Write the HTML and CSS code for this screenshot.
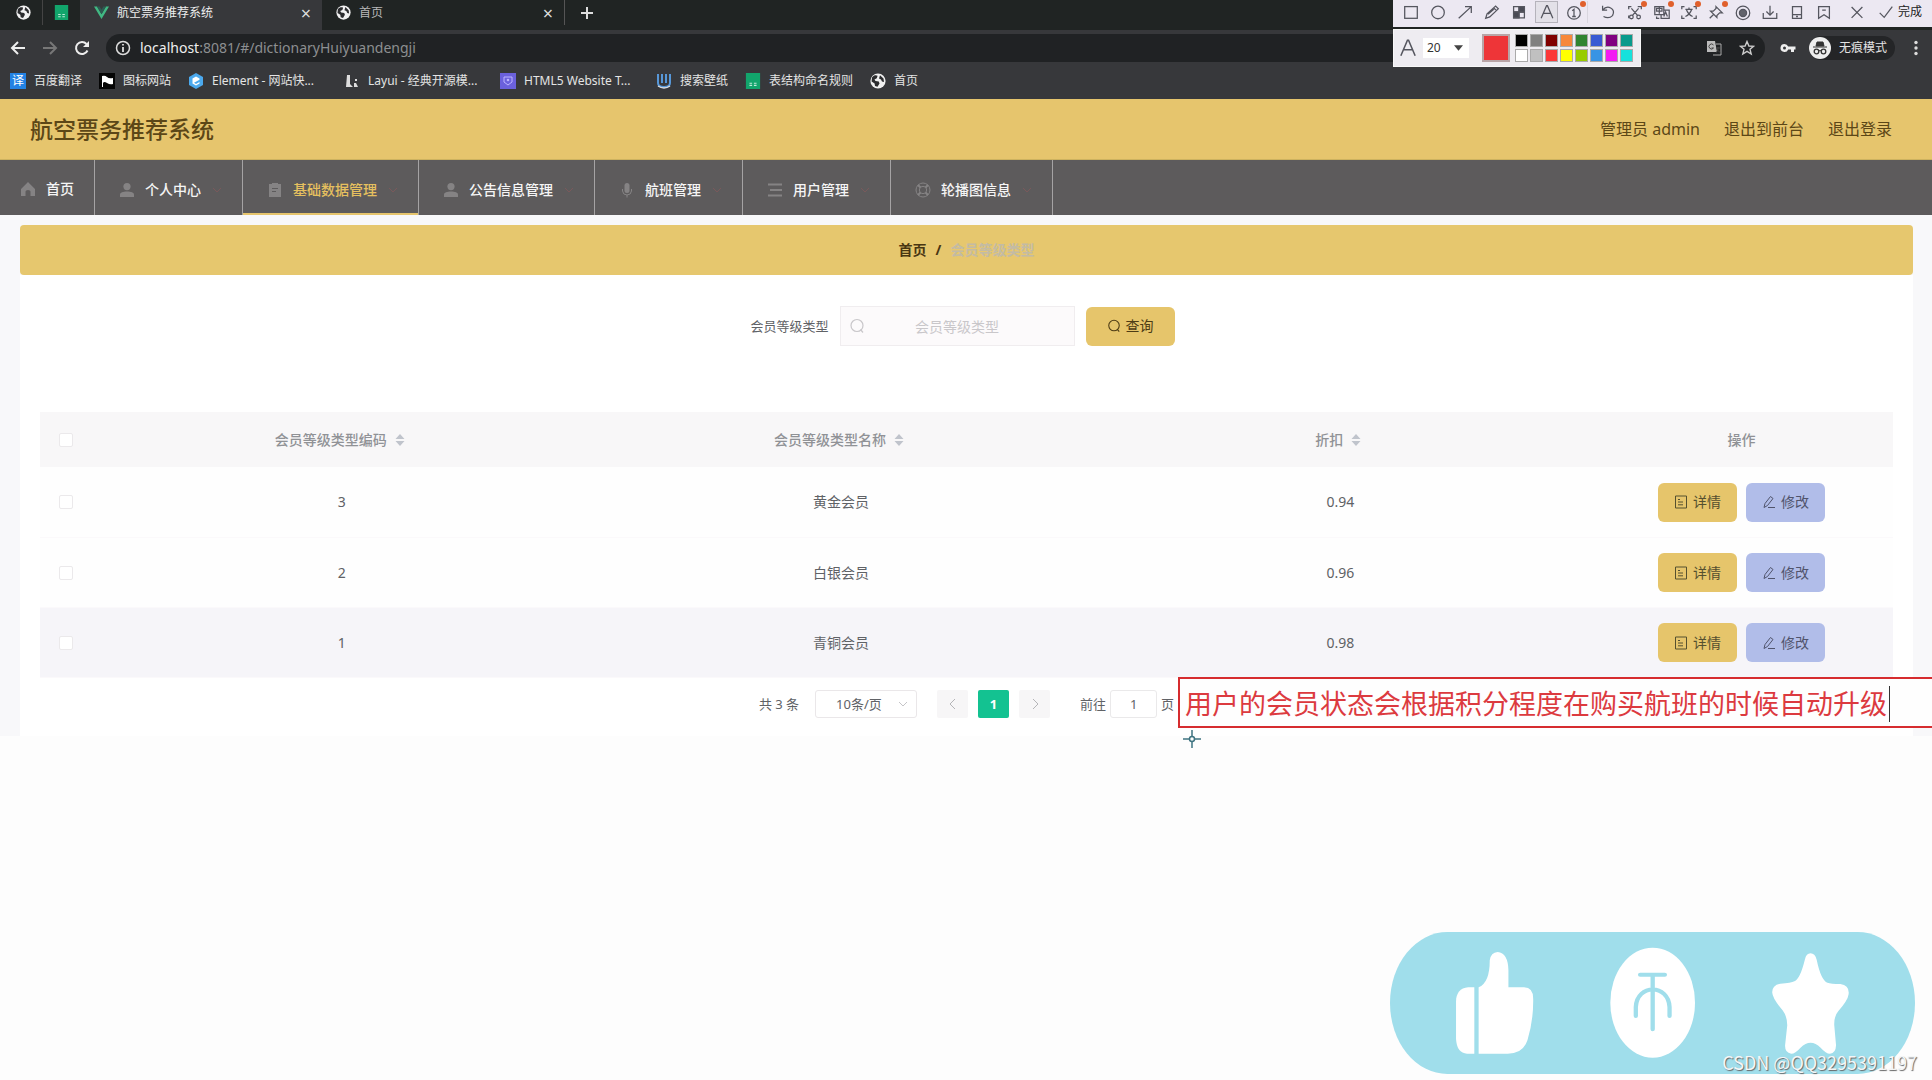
FILE: index.html
```html
<!DOCTYPE html>
<html lang="zh-CN">
<head>
<meta charset="utf-8">
<title>航空票务推荐系统</title>
<link rel="stylesheet" href="styles.css">
</head>
<body>
<svg class="sprite" aria-hidden="true">
  <symbol id="globe" viewBox="0 0 16 16"><circle cx="8" cy="8" r="7.6" fill="#f1f1f1"/><path d="M2 4.5C4 2 6 2 7.600 2.800L6.800 5.200 4.500 6.500 5.500 8 8.800 8.500 9.500 10.500 7.500 13.800 5 13 4.600 10.500 1.600 8.500ZM10 2.200 13.500 5.500 14 9 12 8.600 11 6.500 9 5.600Z" fill="#2b2c2e"/></symbol>
  <symbol id="sheet" viewBox="0 0 16 18"><path d="M0 0H16V18H0Z" fill="#12a56c"/><path d="M4 11.500H7M9 11.500H12M4 14H7M9 14H12" stroke="#bfead8" stroke-width="1.300"/></symbol>
  <symbol id="person" viewBox="0 0 16 16"><circle cx="8" cy="4.600" r="3.600"/><path d="M1 15V12.500C1 10.500 4 9.500 8 9.500S15 10.500 15 12.500V15Z"/></symbol>
  <symbol id="chev" viewBox="0 0 12 12"><path d="M2 4 6 8 10 4" fill="none" stroke="currentColor"/></symbol>
  <symbol id="search" viewBox="0 0 16 16"><circle cx="8" cy="7.500" r="6" fill="none" stroke="currentColor" stroke-width="1.200"/><path d="M11.500 11.500 14 14.500" stroke="currentColor" stroke-width="1.200"/></symbol>
  <symbol id="doc" viewBox="0 0 14 14"><path d="M1.500 1H12.500V13H1.500ZM4 4.500H6M4 7H9M4 9.800H9" fill="none" stroke="currentColor"/></symbol>
  <symbol id="edit" viewBox="0 0 14 14"><path d="M2 12.500 3 8.500 8.500 1.500 11 3.500 5.500 10.500ZM6 12.500H13" fill="none" stroke="currentColor"/></symbol>
  <symbol id="sort" viewBox="0 0 10 14"><path d="M5 1 9.500 6H.5ZM5 13 .5 8H9.500Z" fill="#c0c4cc"/></symbol>
</svg>

<header class="browser">
  <div class="tabs">
    <div class="pin"><svg class="i16"><use href="#globe"/></svg></div>
    <div class="pin pin-line"><svg class="i16"><use href="#sheet"/></svg></div>
    <div class="tab tab-on">
      <svg class="i16" viewBox="0 0 16 16"><path d="M0 1.500H3.200L8 9.800 12.800 1.500H16L8 15Z" fill="#41b883"/><path d="M3.200 1.500H6L8 5 10 1.500H12.800L8 9.800Z" fill="#2c5b52"/></svg>
      <span>航空票务推荐系统</span>
      <button class="x" aria-label="关闭标签页">×</button>
    </div>
    <div class="tab">
      <svg class="i16"><use href="#globe"/></svg><span>首页</span>
      <button class="x" aria-label="关闭标签页">×</button>
    </div>
    <button class="plus" aria-label="新标签页"><svg class="i16" viewBox="0 0 16 16"><path d="M8 2V14M2 8H14" stroke="#ddd" stroke-width="2"/></svg></button>
  </div>
  <div class="toolbar">
    <button class="tool" aria-label="后退"><svg class="i16" viewBox="0 0 16 16"><path d="M15 8H2M8 2 2 8 8 14" fill="none" stroke="#eee" stroke-width="2"/></svg></button>
    <button class="tool" aria-label="前进"><svg class="i16" viewBox="0 0 16 16"><path d="M1 8H14M8 2 14 8 8 14" fill="none" stroke="#777" stroke-width="2"/></svg></button>
    <button class="tool" aria-label="刷新"><svg class="i16" viewBox="0 0 16 16"><path d="M13.500 10.500A6 6 0 1 1 12.500 4" fill="none" stroke="#eee" stroke-width="2"/><path d="M15 1V7H9Z" fill="#eee"/></svg></button>
    <div class="address">
      <svg class="i16" viewBox="0 0 16 16"><circle cx="8" cy="8" r="6.500" fill="none" stroke="#ddd" stroke-width="1.500"/><path d="M8 7V12M8 4V5.600" stroke="#ddd" stroke-width="1.800"/></svg>
      <span class="url"><b>localhost</b>:8081/#/dictionaryHuiyuandengji</span>
      <svg class="i16" viewBox="0 0 16 16"><path d="M1 1H9L11 12H1Z" fill="#bbb"/><path d="M10 4H15V15H7" fill="none" stroke="#aaa"/><path d="M7.500 5A2.500 2.500 0 1 0 7.500 8H5.500M10 8H14M12 7V8C12 10 11 12 10 12.500M11 9.500 14 12.500" fill="none" stroke="#444"/></svg>
      <svg class="i16" viewBox="0 0 16 16"><path d="M8 1.500 9.900 6 14.600 6.300 11 9.300 12.200 14 8 11.400 3.800 14 5 9.300 1.400 6.300 6.100 6Z" fill="none" stroke="#ccc" stroke-width="1.400"/></svg>
    </div>
    <svg class="i16" viewBox="0 0 16 16"><path d="M4.500 4A4 4 0 1 0 8.200 9.500H11V12H14V9.500H15.500V6.500H8.200A4 4 0 0 0 4.500 4ZM4.500 6.500A1.500 1.500 0 1 1 4.500 9.500 1.500 1.500 0 0 1 4.500 6.500Z" fill="#eee" fill-rule="evenodd"/></svg>
    <div class="incog">
      <svg class="i22" viewBox="0 0 22 22"><circle cx="11" cy="11" r="11" fill="#eee"/><path d="M7 9 8 5H14L15 9ZM4 10H18" stroke="#333" fill="#333"/><circle cx="7.500" cy="14.500" r="2.300" fill="none" stroke="#333" stroke-width="1.300"/><circle cx="14.500" cy="14.500" r="2.300" fill="none" stroke="#333" stroke-width="1.300"/><path d="M9.500 14Q11 13 12.500 14" fill="none" stroke="#333"/></svg>
      <span>无痕模式</span>
    </div>
    <svg class="i16" viewBox="0 0 16 16" fill="#ddd"><circle cx="8" cy="2.500" r="1.700"/><circle cx="8" cy="8" r="1.700"/><circle cx="8" cy="13.500" r="1.700"/></svg>
  </div>
  <nav class="marks">
    <a href="#"><span class="yi">译</span>百度翻译</a>
    <a href="#"><svg class="i16" viewBox="0 0 16 16"><path d="M0 0H16V16H0Z" fill="#050505"/><path d="M3 3Q6 2 8 4T14 5V11Q11 12 8 10T4 10V14H3Z" fill="#fff"/></svg>图标网站</a>
    <a href="#" class="long"><svg class="i16" viewBox="0 0 16 16"><path d="M8 0 15 4V12L8 16 1 12V4Z" fill="#4ba9ee"/><path d="M11.500 5.500 8 3.500 4.500 5.500V10.500L8 12.500 11.500 10.500V9L8 11 6 9.800 11.500 6.800Z" fill="#fff"/></svg>Element - 网站快...</a>
    <a href="#" class="long"><svg class="i16" viewBox="0 0 16 16"><path d="M3 2H6V11L9 14H2ZM11 6H13V8H11ZM10 10H12L14 14H10Z" fill="#ddd"/></svg>Layui - 经典开源模...</a>
    <a href="#" class="long"><svg class="i16" viewBox="0 0 16 16"><path d="M0 0H16V16H0Z" fill="#6b61dc"/><path d="M4 4H12V9L8 12 4 9Z" fill="none" stroke="#bdb5ff"/><circle cx="8" cy="7" r="1.300" fill="#bdb5ff"/></svg>HTML5 Website T...</a>
    <a href="#"><svg class="i16" viewBox="0 0 16 16"><path d="M2 1V10Q2 14 8 14T14 10V1M6 1V10M10 1V10" fill="none" stroke="#5797d8" stroke-width="2"/><path d="M2 13Q8 17 14 13" fill="none" stroke="#ddd" stroke-width="1.500"/></svg>搜索壁纸</a>
    <a href="#"><svg class="i16"><use href="#sheet"/></svg>表结构命名规则</a>
    <a href="#"><svg class="i16"><use href="#globe"/></svg>首页</a>
  </nav>
</header>

<header class="site">
  <h1>航空票务推荐系统</h1>
  <a href="#">管理员 admin</a><a href="#">退出到前台</a><a href="#">退出登录</a>
</header>
<nav class="menu">
  <a href="#" class="home"><svg viewBox="0 0 16 16"><path d="M8 1 1 8V15H5.500V10.500Q5.500 9 8 9T10.500 10.500V15H15V8Z"/></svg>首页</a>
  <a href="#"><svg><use href="#person"/></svg>个人中心<svg class="chev"><use href="#chev"/></svg></a>
  <a href="#" class="on"><svg viewBox="0 0 16 16"><path d="M2 2H5V1H11V2H14V15H2ZM5 6V7H11V6ZM5 9V10H9V9Z" fill-rule="evenodd"/></svg>基础数据管理<svg class="chev"><use href="#chev"/></svg></a>
  <a href="#"><svg><use href="#person"/></svg>公告信息管理<svg class="chev"><use href="#chev"/></svg></a>
  <a href="#"><svg viewBox="0 0 16 16"><rect x="5.500" y="1" width="5" height="10" rx="2.500"/><path d="M3.500 7V9Q4 13 8 13T12.500 9V7M8 13V15.500" fill="none" stroke="#858384"/></svg>航班管理<svg class="chev"><use href="#chev"/></svg></a>
  <a href="#"><svg viewBox="0 0 16 16"><path d="M1 2.500H15M3 8H15M1 13.500H15" stroke="#858384" stroke-width="2"/></svg>用户管理<svg class="chev"><use href="#chev"/></svg></a>
  <a href="#"><svg viewBox="0 0 16 16"><g fill="none" stroke="#858384"><circle cx="8" cy="8" r="7"/><circle cx="8" cy="8" r="3.700"/><path d="M3 3 5.500 5.500M13 3 10.500 5.500M3 13 5.500 10.500M13 13 10.500 10.500" stroke-width="2"/></g></svg>轮播图信息<svg class="chev"><use href="#chev"/></svg></a>
</nav>

<main>
  <nav class="crumb"><a href="#">首页</a><span>/</span><span class="here">会员等级类型</span></nav>
  <section class="card">
    <form class="query">
      <label for="q">会员等级类型</label>
      <div class="field"><svg><use href="#search"/></svg><input id="q" type="text" placeholder="会员等级类型"></div>
      <button type="button" class="btn gold"><svg><use href="#search"/></svg>查询</button>
    </form>
    <table>
      <colgroup><col class="c-check"><col><col><col><col class="c-act"></colgroup>
      <thead><tr>
        <th><input type="checkbox" aria-label="全选"></th>
        <th>会员等级类型编码<svg class="sort"><use href="#sort"/></svg></th>
        <th>会员等级类型名称<svg class="sort"><use href="#sort"/></svg></th>
        <th>折扣<svg class="sort"><use href="#sort"/></svg></th>
        <th>操作</th>
      </tr></thead>
      <tbody>
        <tr><td><input type="checkbox" aria-label="选择 3"></td><td>3</td><td>黄金会员</td><td>0.94</td>
          <td><div class="acts"><button class="btn gold"><svg><use href="#doc"/></svg>详情</button><button class="btn blue"><svg><use href="#edit"/></svg>修改</button></div></td></tr>
        <tr><td><input type="checkbox" aria-label="选择 2"></td><td>2</td><td>白银会员</td><td>0.96</td>
          <td><div class="acts"><button class="btn gold"><svg><use href="#doc"/></svg>详情</button><button class="btn blue"><svg><use href="#edit"/></svg>修改</button></div></td></tr>
        <tr class="hover"><td><input type="checkbox" aria-label="选择 1"></td><td>1</td><td>青铜会员</td><td>0.98</td>
          <td><div class="acts"><button class="btn gold"><svg><use href="#doc"/></svg>详情</button><button class="btn blue"><svg><use href="#edit"/></svg>修改</button></div></td></tr>
      </tbody>
    </table>
    <div class="pager">
      <span>共 3 条</span>
      <div class="size"><select aria-label="每页条数"><option>10条/页</option></select><svg><use href="#chev"/></svg></div>
      <div class="pages">
        <button aria-label="上一页"><svg viewBox="0 0 12 12"><path d="M8 1 3 6 8 11" fill="none" stroke="currentColor"/></svg></button>
        <button class="cur">1</button>
        <button aria-label="下一页"><svg viewBox="0 0 12 12"><path d="M4 1 9 6 4 11" fill="none" stroke="currentColor"/></svg></button>
      </div>
      <label class="jump">前往<input type="text" value="1">页</label>
    </div>
  </section>
</main>

<aside class="snip">
  <div class="snip-tools">
    <button aria-label="矩形"><svg viewBox="0 0 20 20"><rect x="3" y="4" width="14" height="13"/></svg></button>
    <button aria-label="椭圆"><svg viewBox="0 0 20 20"><circle cx="10" cy="10.500" r="7"/></svg></button>
    <button aria-label="箭头"><svg viewBox="0 0 20 20"><path d="M3 17 17 4M10 4H17V11"/></svg></button>
    <button aria-label="画笔"><svg viewBox="0 0 20 20"><path d="M3 17 4.500 12 14 3.500 17 6.500 7.500 15.500ZM12 5.500 15 8.500M5.500 12.500 12 7"/></svg></button>
    <button aria-label="马赛克"><svg viewBox="0 0 20 20"><path d="M4 4H16V16.500H4ZM10 4V16.500M4 10H16"/><path d="M10 4H16V10H10ZM4 10H10V16.500H4Z" fill="#4a4b55"/></svg></button>
    <button class="sel" aria-label="文字"><svg viewBox="0 0 20 20"><path d="M3.500 17 9.500 3H10.500L16.500 17M6 11.500H14"/></svg></button>
    <button class="dot" aria-label="序号"><svg viewBox="0 0 20 20"><circle cx="10" cy="11" r="7"/><path d="M8 8.500 10 7V15M8 15H12"/></svg></button>
    <button class="line" aria-label="撤销"><svg viewBox="0 0 20 20"><path d="M4 3V8H9M4 8Q8 3 13 5.500T15 14Q11 18 5 15"/></svg></button>
    <button class="dot" aria-label="抠图"><svg viewBox="0 0 20 20"><path d="M3 7V4H6M13 4H17V7M3 14V17M6 6 13 14M14 6 7 14"/><circle cx="6" cy="15.500" r="2"/><circle cx="14" cy="15.500" r="2"/></svg></button>
    <button class="dot" aria-label="翻译"><svg viewBox="0 0 20 20"><path d="M2 4H12V13H2ZM4 6H10V9H4ZM7 4V12M12 8H18V17H9V13M12 15 14 10 16 15M4 15V17H7"/></svg></button>
    <button class="dot" aria-label="识别文字"><svg viewBox="0 0 20 20"><path d="M2 7V4H5M15 4H18V7M2 14V17H5M15 17H18V14M6 7H14M10 5V7M7 7Q9 13 14 15M13 7Q11 13 6 15"/></svg></button>
    <button class="dot" aria-label="钉住"><svg viewBox="0 0 20 20"><path d="M10 4 17 11 14 11 11 14V16L4 9H7L10 6ZM7 13 3 17"/></svg></button>
    <button aria-label="录屏"><svg viewBox="0 0 20 20"><circle cx="10" cy="11" r="7.500"/><circle cx="10" cy="11" r="4" fill="#62636b"/></svg></button>
    <button aria-label="保存"><svg viewBox="0 0 20 20"><path d="M10 3V13M6 9.500 10 13.500 14 9.500M2.500 11V17H17.500V11"/></svg></button>
    <button aria-label="手机"><svg viewBox="0 0 20 20"><path d="M5 4H15V17H5ZM5 13H15M9 15H11"/></svg></button>
    <button aria-label="收藏"><svg viewBox="0 0 20 20"><path d="M4 4H16V17L10 13 4 17ZM8 8H12"/></svg></button>
    <button class="close" aria-label="取消"><svg viewBox="0 0 20 20"><path d="M4 4.500 16 16.500M16 4.500 4 16.500"/></svg></button>
    <button class="done"><svg viewBox="0 0 20 20"><path d="M3 11 8 16 17 4"/></svg>完成</button>
  </div>
  <div class="snip-opts">
    <svg class="i22" viewBox="0 0 20 20"><path d="M3.500 17 9.500 3H10.500L16.500 17M6 11.500H14"/></svg>
    <div class="fsize"><select aria-label="字号"><option>20</option></select><svg viewBox="0 0 10 6"><path d="M0 0H10L5 6Z" fill="#444" stroke="none"/></svg></div>
    <span class="big"></span>
    <div class="swatches">
      <i class="k1"></i><i class="k2"></i><i class="k3"></i><i class="k4"></i><i class="k5"></i><i class="k6"></i><i class="k7"></i><i class="k8"></i>
      <i class="k9"></i><i class="k10"></i><i class="k11"></i><i class="k12"></i><i class="k13"></i><i class="k14"></i><i class="k15"></i><i class="k16"></i>
    </div>
  </div>
</aside>

<div class="note"><span>用户的会员状态会根据积分程度在购买航班的时候自动升级</span></div>
<svg class="cross" viewBox="0 0 18 18"><path d="M9 0V6M9 12V18M0 9H6M12 9H18" stroke="#3f7481" stroke-width="1.500"/><circle cx="9" cy="9" r="2.500" fill="none" stroke="#3f7481" stroke-width="1.500"/></svg>

<svg class="cheer" viewBox="57 65 1463 426" preserveAspectRatio="none">
  <rect x="57" y="65" width="1463" height="426" rx="160" ry="213" fill="#a0deeb"/>
  <g fill="#fff">
    <path d="M292 231H275Q241 234 241 275V385Q243 428 272 430H292Z"/>
    <path d="M304 231Q335 218 335 150Q338 126 357 125Q386 128 387 180V231H430Q456 231 456 265Q457 330 440 390Q427 430 385 430H304Z"/>
    <ellipse cx="789" cy="277" rx="118" ry="165"/>
    <path d="M1229 129Q1241 129 1246 148Q1258 210 1276 217Q1285 221 1312 221Q1338 225 1335 252Q1333 270 1306 303Q1294 318 1295 345L1300 405Q1299 430 1283 430Q1272 430 1257 412Q1229 382 1201 412Q1186 430 1175 430Q1157 428 1158 405L1164 345Q1164 318 1151 300Q1123 265 1122 246Q1122 224 1145 220Q1175 218 1184 213Q1200 205 1213 148Q1217 129 1229 129Z"/>
  </g>
  <path d="M754 193H823M789 193V357M742 317V290C745 220 833 220 836 290V317" fill="none" stroke="#a0deeb" stroke-width="12" stroke-linecap="round"/>
</svg>
<div class="mark">CSDN @QQ3295391197</div>
</body>
</html>
```
FILE: styles.css
```css
* { box-sizing: border-box; }
body {
  margin: 0; position: relative; min-height: 100vh; overflow-x: hidden;
  background: #fdfdfd; color: #606266;
  font: 14px/20px "Noto Sans", "Noto Sans CJK SC", sans-serif;
}
a { color: inherit; text-decoration: none; }
button, input, select { font: inherit; color: inherit; margin: 0; padding: 0; border: 0; background: none; }
svg { flex: none; }
.sprite { position: absolute; width: 0; height: 0; }
.i16 { width: 16px; height: 16px; }
.i22 { width: 22px; height: 22px; }

/* browser frame */
.browser { background: #37383b; color: #e4e4e4; font-size: 12px; height: 99px; }
.tabs { display: flex; height: 30px; background: #202423; padding-left: 4px; }
.pin { width: 38px; height: 25px; display: flex; align-items: center; justify-content: center; }
.pin-line { border-left: 1px solid #444; }
.pin .i16, .tab .i16 { width: 15px; height: 15px; }
.tab { width: 242px; height: 30px; display: flex; align-items: center; gap: 8px; padding: 0 8px 5px 14px; color: #b8b8b8; }
.tab-on { background: #37383b; color: #eee; }
.x { margin-left: auto; width: 16px; font-size: 18px; color: #ddd; }
.plus { width: 44px; height: 25px; border-left: 1px solid #555; line-height: 0; }
.toolbar { display: flex; align-items: center; height: 35px; padding: 0 8px 0 10px; }
.tool { width: 32px; height: 28px; text-align: left; line-height: 0; }
.address { flex: 1; height: 28px; border-radius: 14px; background: #202224; display: flex; align-items: center; gap: 17px; padding: 0 10px 0 9px; margin-right: 15px; }
.url { flex: 1; font-size: 14px; color: #8d8f91; margin-left: -8px; }
.url b { color: #eee; font-weight: 400; }
.incog { display: flex; align-items: center; gap: 8px; height: 24px; margin: 0 13px; padding-right: 8px; border-radius: 12px; background: #242527; }
.marks { display: flex; height: 32px; align-items: center; gap: 17px; padding-left: 10px; }
.marks a { display: flex; align-items: center; gap: 8px; white-space: nowrap; }
.marks .long { min-width: 139px; }
.yi { width: 16px; height: 16px; background: #2382e3; color: #fff; line-height: 16px; text-align: center; }

/* site header */
.site { display: flex; align-items: center; gap: 24px; height: 61px; padding: 0 40px 0 30px; background: #e6c56d; color: #5c4717; font-size: 16px; border-bottom: 1px solid #cdb25f; }
.site h1 { margin: 0 auto 0 0; font-size: 23px; font-weight: 500; line-height: 30px; }
.menu { display: flex; height: 55px; background: #5d5b5c; color: #f5f5f5; }
.menu a { display: flex; align-items: center; padding: 5px 19px 0 20px; border-right: 1px solid #a5a3a4; font-weight: 500; }
.menu .home { padding: 2px 20px 0 16px; }
.menu svg { width: 16px; height: 16px; margin: 0 10px 0 4px; fill: #858384; }
.menu .chev { width: 12px; height: 12px; margin: 0 0 0 10px; color: #79595b; }
.menu .on { color: #e6c05f; box-shadow: inset 0 -2px #e6c56d; }

/* content */
main { background: #f8f8fa; padding: 10px 19px 0 20px; height: 521px; }
.crumb { display: flex; align-items: center; justify-content: center; gap: 9px; height: 50px; background: #e6c76e; border-radius: 4px; font-weight: 700; color: #493612; }
.crumb .here { color: #c3bba4; }
.card { background: #fff; height: 461px; padding: 31px 20px 0; }
.query { display: flex; align-items: center; justify-content: center; gap: 11px; height: 40px; margin-bottom: 66px; padding-right: 8px; font-size: 13px; }
.field { display: flex; align-items: center; width: 235px; height: 40px; border: 1px solid #f0edef; background: #fcfafb; color: #c9c7ca; padding: 0 8px; }
.field svg { width: 16px; height: 16px; }
.field input { flex: 1; min-width: 0; height: 36px; padding-right: 16px; text-align: center; font-size: 14px; }
.field input::placeholder { color: #c9c7ca; }
.btn { display: flex; align-items: center; justify-content: center; gap: 5px; width: 79px; height: 39px; border-radius: 6px; font-size: 14px; color: #55502f; }
.btn svg { width: 14px; height: 14px; }
.query .btn { width: 89px; color: #4c3b14; }
.gold { background: #e6c56b; }
.blue { background: #b1bde9; color: #50546c; }
table { width: 100%; table-layout: fixed; border-collapse: collapse; text-align: center; }
.c-check { width: 52px; }
.c-act { width: 303px; }
th { height: 55px; padding: 0; background: #f8f7f8; color: #909296; font-weight: 500; }
td { height: 70px; padding: 1px 0 0; background: #fefefe; border-bottom: 1px solid #fbf9fb; }
.hover td { background: #f6f5f9; }
th input, td input { appearance: none; display: block; width: 14px; height: 14px; margin: 0 auto; border: 1px solid #ebe9eb; border-radius: 2px; background: #fff; }
.sort { width: 10px; height: 14px; margin: 0 4px 0 8px; vertical-align: -2px; }
.acts { display: flex; gap: 9px; justify-content: center; }
.pager { display: flex; align-items: center; justify-content: center; height: 28px; margin-top: 12px; font-size: 13px; }
.size { position: relative; margin: 0 20px 0 16px; }
.size select { appearance: none; width: 102px; height: 28px; padding-left: 20px; border: 1px solid #eae7e9; border-radius: 3px; }
.size svg { position: absolute; right: 8px; top: 8px; width: 12px; height: 12px; color: #c5c5c8; }
.pages { display: flex; gap: 10px; margin-right: 30px; }
.pages button { width: 31px; height: 28px; border-radius: 2px; background: #f7f6f7; color: #b5b5b8; line-height: 0; }
.pages svg { width: 12px; height: 12px; }
.pages .cur { background: #13c291; color: #fff; font-weight: 700; }
.jump { display: flex; align-items: center; gap: 4px; }
.jump input { width: 47px; height: 28px; border: 1px solid #eae9ea; border-radius: 3px; text-align: center; }

/* screenshot tool laid over the window */
.snip { position: absolute; top: 0; right: 0; width: 539px; color: #333; font-size: 12px; }
.snip svg { fill: none; stroke: #55565f; stroke-width: 1.4; }
.snip-tools { display: flex; align-items: center; height: 27px; padding: 0 4px 4px; background: #ece8f2; }
.snip-tools button { position: relative; width: 27px; height: 22px; display: flex; align-items: center; justify-content: center; }
.snip-tools button svg { width: 18px; height: 18px; }
.snip-tools .sel { width: 23px; margin: 0 2px 0 3px; border: 1px solid #b5b3bb; background: #e3e1e8; }
.snip-tools .dot::after { content: ""; position: absolute; right: 1px; top: 0; width: 6px; height: 6px; border-radius: 50%; background: #e0602c; }
.snip-tools .line { width: 34px; padding-left: 6px; border-left: 1px solid #d9d6df; }
.snip-tools .close { width: 34px; padding-left: 6px; }
.snip-tools .done { flex: 1; gap: 3px; white-space: nowrap; color: #222; }
.snip-opts { display: flex; align-items: center; width: 248px; height: 38px; margin-top: 2px; padding-left: 3px; background: #eeecf1; border: 1px solid #f8f8f8; }
.fsize { position: relative; margin: 0 13px 0 4px; }
.fsize select { appearance: none; width: 46px; height: 20px; padding-left: 4px; background: #fff; }
.fsize svg { position: absolute; right: 6px; top: 7px; width: 9px; height: 6px; }
.big { width: 28px; height: 28px; background: #ee3538; border: 2px solid #b9a5a7; }
.swatches { display: grid; grid-template-columns: repeat(8, 13px); gap: 2px; margin-left: 5px; }
.swatches i { height: 13px; border: 1px solid #aaa; }
.k1 { background: #000; } .k2 { background: #808080; } .k3 { background: #800000; } .k4 { background: #f7883a; }
.k5 { background: #308430; } .k6 { background: #385ad3; } .k7 { background: #800080; } .k8 { background: #099a8c; }
.k9 { background: #fff; } .k10 { background: #c0c0c0; } .k11 { background: #fb3838; } .k12 { background: #ff0; }
.k13 { background: #99cc00; } .k14 { background: #3894e4; } .k15 { background: #f31bf3; } .k16 { background: #16e1dc; }

.note { position: absolute; left: 1178px; right: -4px; top: 677px; height: 51px; padding: 7px 5px 0; background: #fefefe; border: 2px solid #d62c2f; color: #dc3a3f; font-size: 27px; line-height: 36px; white-space: nowrap; overflow: hidden; }
.note span { display: inline-block; border-right: 1px solid #333; padding-right: 2px; }
.cross { position: absolute; left: 1183px; top: 730px; width: 18px; height: 18px; }
.cheer { position: absolute; right: 17px; bottom: 6px; width: 525px; height: 142px; }
.mark { position: absolute; right: 15px; bottom: 6px; font: 18px/24px "Noto Sans CJK SC", sans-serif; color: #f4f6f7; text-shadow: 1px 1px 1px #666; }
```
